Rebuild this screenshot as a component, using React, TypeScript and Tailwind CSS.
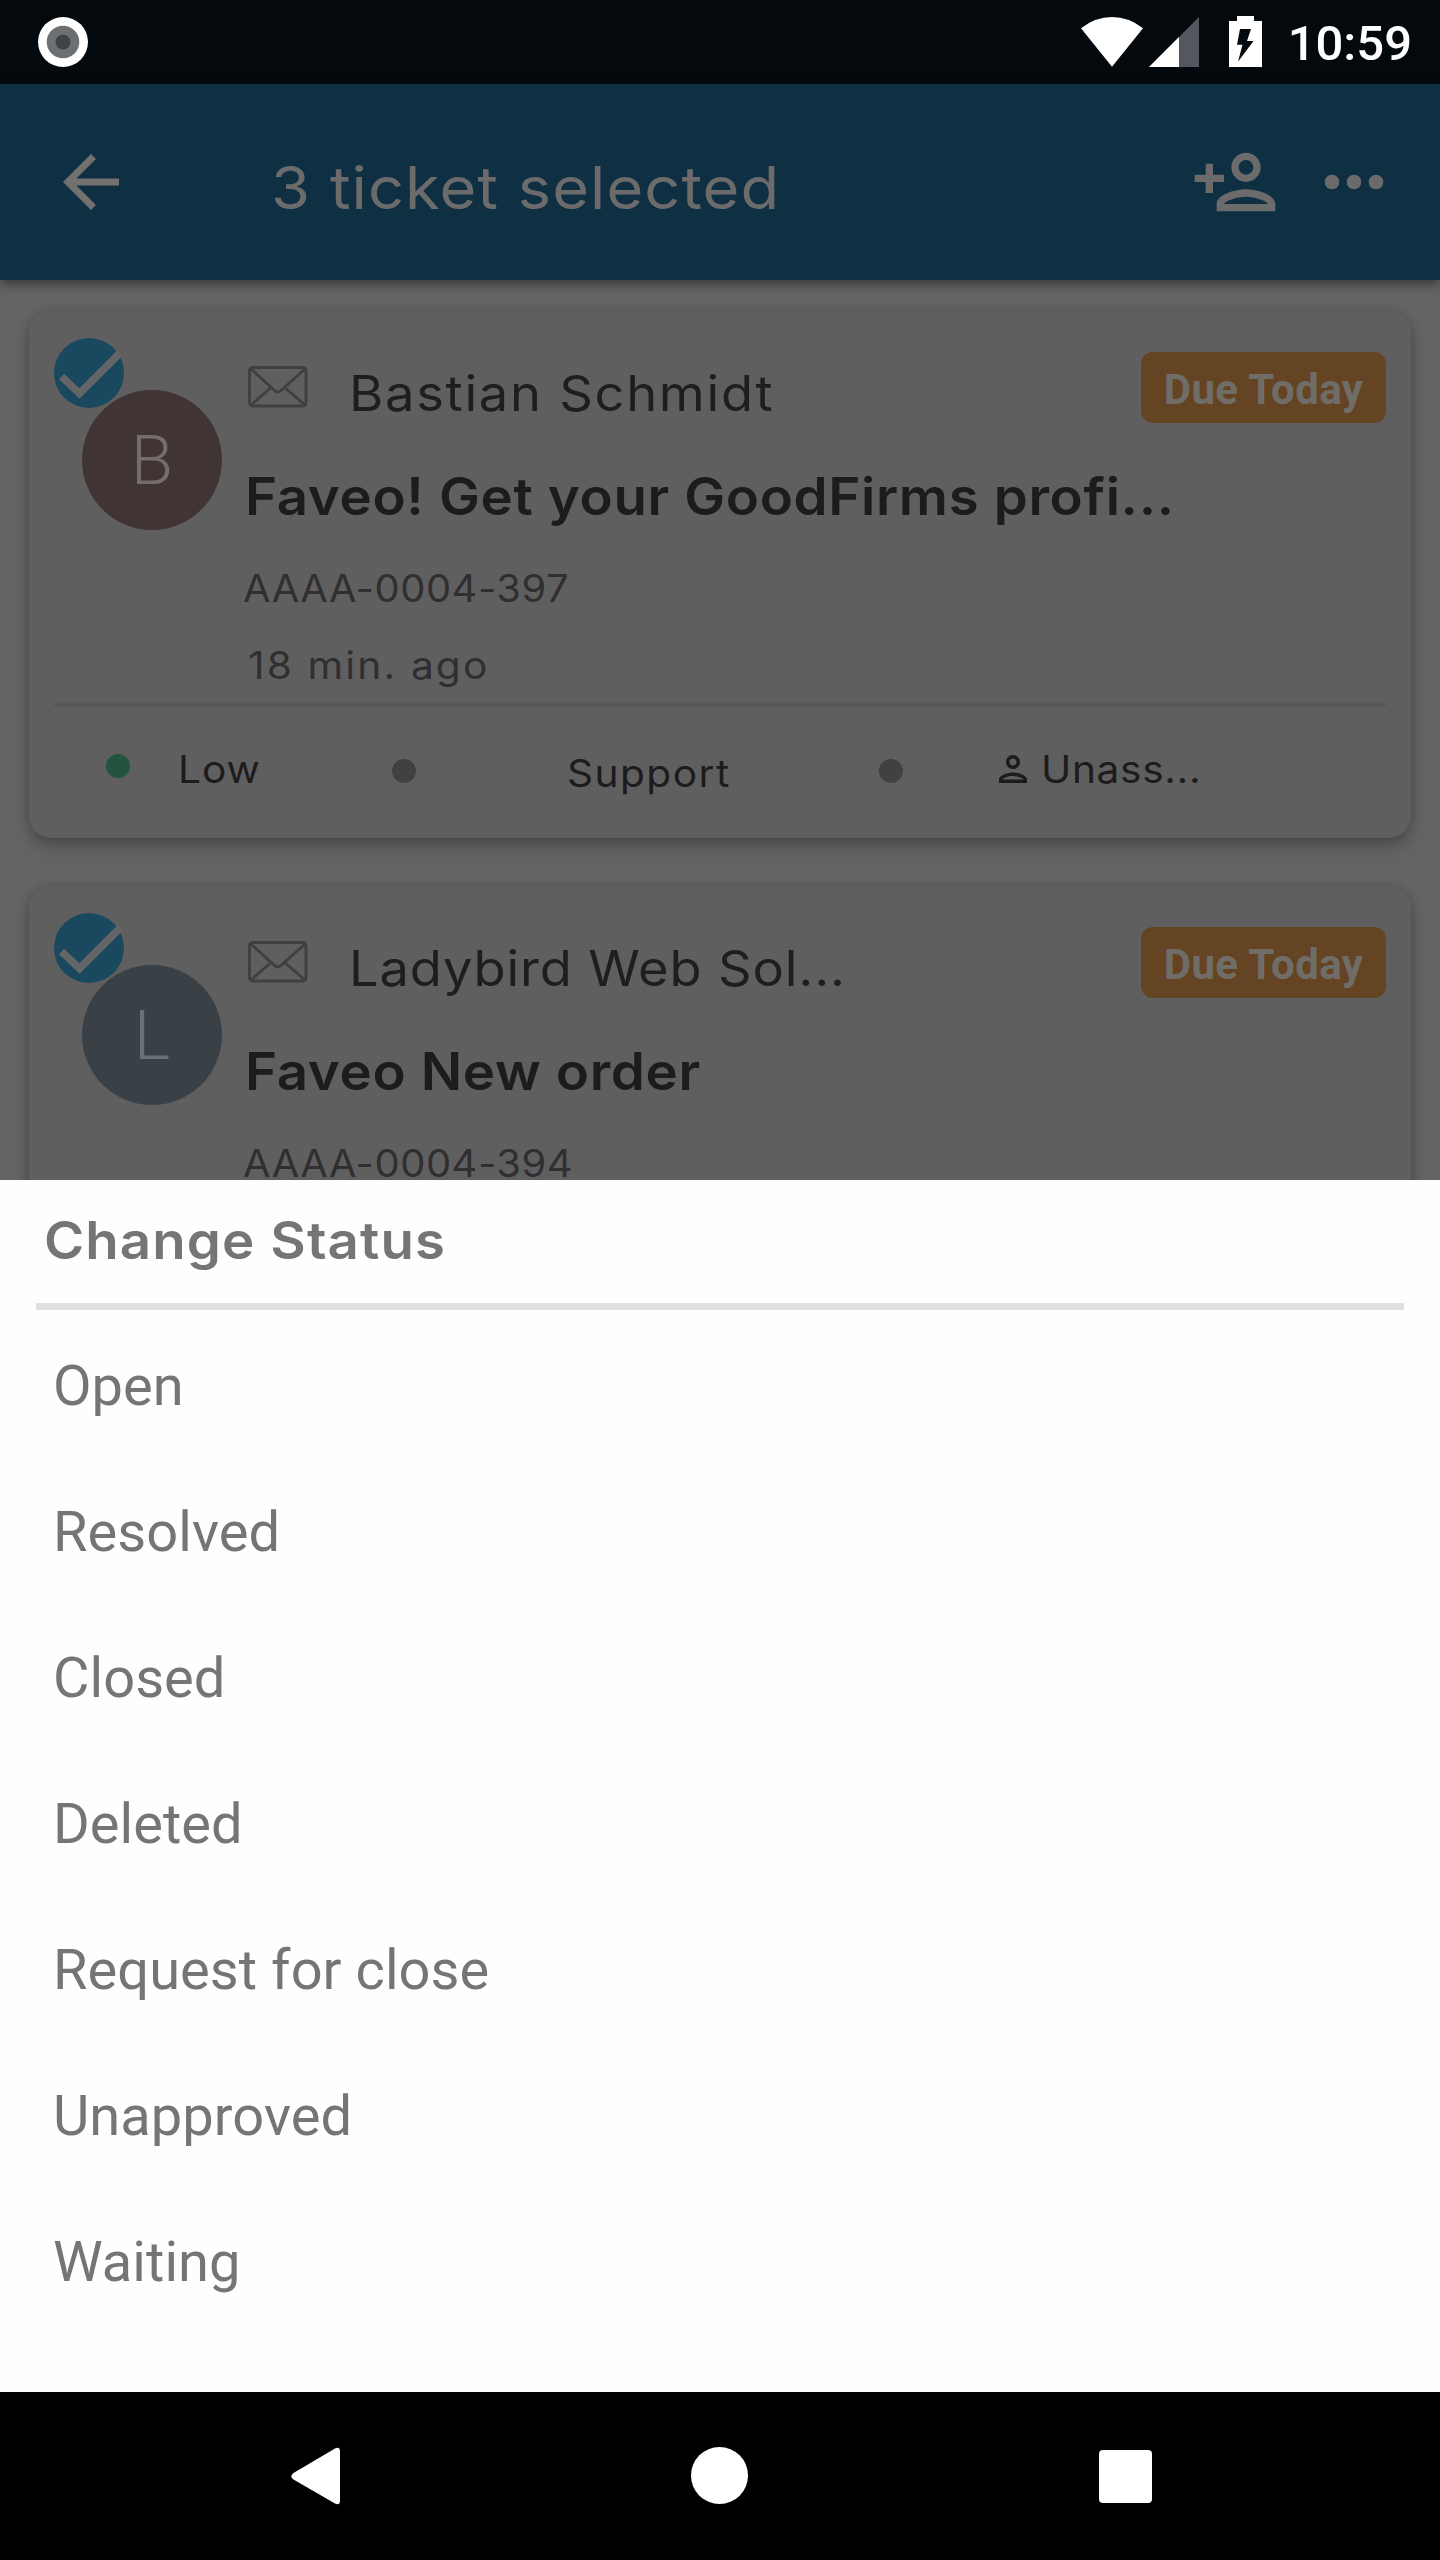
import type { ReactNode } from "react";

function StatusBar() {
  return (
    <div className="flex h-[84px] shrink-0 items-center bg-[#04090d] pl-[38px] pr-[28px]">
      <svg className="h-[50px] w-[50px]" viewBox="0 0 50 50">
        <circle cx="25" cy="25" r="25" fill="#fff" />
        <circle cx="25" cy="25" r="16.3" fill="#6c7072" />
        <circle cx="25" cy="25" r="7.5" fill="#3f4345" />
      </svg>
      <div className="ml-auto flex items-center text-white">
        <svg className="h-[52px] w-[182px]" viewBox="1081 16 182 52">
          <path d="M1081 28.300Q1095 17 1112 17T1143 28.300L1112 66.800Z" fill="#fff" />
          <path d="M1199 17V67H1149Z" fill="#54585e" />
          <path d="M1179 37V67H1149Z" fill="#fff" />
          <path d="M1237 16h17v5h8v46h-33V21h8z" fill="#fff" />
          <path d="M1240 29h11l-4 12h6.500L1238 61.700l4.500-17h-5.500z" fill="#04090d" />
        </svg>
        <span className="ml-[25px] mt-[4px] font-['Roboto',sans-serif] text-[49px] leading-[50px] font-medium">
          10:59
        </span>
      </div>
    </div>
  );
}

function Header() {
  return (
    <header className="relative flex h-[196px] shrink-0 items-center bg-[#0f2f42] pl-[49px] pr-[42px] text-[#6c6b6c] shadow-[0_4px_10px_rgba(0,0,0,0.45)]">
      <svg className="h-[84px] w-[84px]" viewBox="0 0 24 24" fill="#737170">
        <path d="M20 11H7.830l5.590-5.590L12 4l-8 8 8 8 1.410-1.410L7.830 13H20v-2z" />
      </svg>
      <h1 className="ml-[138px] mt-[12px] origin-left scale-x-[1.07] font-['Inter',sans-serif] text-[59px] leading-[72px] font-normal tracking-[1px] whitespace-nowrap">
        3 ticket selected
      </h1>
      <svg className="ml-auto h-[88px] w-[88px]" viewBox="0 0 24 24" fill="currentColor">
        <path d="M15 12c2.210 0 4-1.790 4-4s-1.790-4-4-4-4 1.790-4 4 1.790 4 4 4zm0-6c1.100 0 2 .9 2 2s-.9 2-2 2-2-.9-2-2 .9-2 2-2zm0 8c-2.670 0-8 1.340-8 4v2h16v-2c0-2.660-5.330-4-8-4zm-6 4c.22-.72 3.310-2 6-2 2.700 0 5.800 1.290 6 2H9zm-3-3v-3h3v-2H6V7H4v3H1v2h3v3z" />
      </svg>
      <svg className="ml-[31px] h-[88px] w-[88px]" viewBox="0 0 24 24" fill="currentColor">
        <circle cx="6" cy="12" r="2" />
        <circle cx="12" cy="12" r="2" />
        <circle cx="18" cy="12" r="2" />
      </svg>
    </header>
  );
}

function CheckBadge() {
  return (
    <svg className="absolute -left-[28px] -top-[52px] h-[70px] w-[70px]" viewBox="0 0 70 70">
      <circle cx="35" cy="35" r="35" fill="#19485f" />
      <path d="M7.500 38.500L25.500 55.500L66 15" fill="none" stroke="#646567" strokeWidth="7.500" />
    </svg>
  );
}

function Envelope() {
  return (
    <svg className="h-[42px] w-[60px]" viewBox="0 0 60 42" fill="none" stroke="#403e40" strokeWidth="2.800">
      <rect x="1.500" y="1.500" width="56.500" height="38.500" rx="3" />
      <path d="M3 3L26 24Q29.700 28 33.500 24L57 3M3 39L23 21.500M57 39L36.500 21.500" />
    </svg>
  );
}

interface Ticket {
  initial: string;
  avatar: string;
  name: string;
  nameTracking: string;
  subject: string;
  id: string;
  details?: { age: string; priority: string; department: string; assignee: string };
}

const tickets: Ticket[] = [
  {
    initial: "B",
    avatar: "bg-[#403534] text-[#736d6b]",
    name: "Bastian Schmidt",
    nameTracking: "tracking-[1.600px]",
    subject: "Faveo! Get your GoodFirms profi...",
    id: "AAAA-0004-397",
    details: { age: "18 min. ago", priority: "Low", department: "Support", assignee: "Unass..." },
  },
  {
    initial: "L",
    avatar: "bg-[#394147] text-[#6a7075]",
    name: "Ladybird Web Sol...",
    nameTracking: "tracking-[0.780px]",
    subject: "Faveo New order",
    id: "AAAA-0004-394",
  },
];

function Dot({ className }: { className: string }) {
  return <span className={"block h-[24px] w-[24px] shrink-0 rounded-full " + className} />;
}

function Label({ className, children }: { className: string; children: ReactNode }) {
  return (
    <span className={"origin-left text-[38px] leading-[46px] whitespace-nowrap text-[#1d1b1d] " + className}>
      {children}
    </span>
  );
}

function TicketCard({ ticket }: { ticket: Ticket }) {
  const { details } = ticket;
  return (
    <article className="h-[527px] shrink-0 rounded-[22px] bg-[#605f60] px-[25px] font-['Inter',sans-serif] shadow-[0_8px_16px_rgba(0,0,0,0.24),0_0_10px_rgba(0,0,0,0.12)]">
      <div className="flex h-[391px]">
        <div className="relative ml-[28px] mt-[79px] h-[140px] w-[140px] shrink-0">
          <div
            className={
              "flex h-full w-full items-center justify-center rounded-full font-['Roboto',sans-serif] text-[69px] leading-none font-light " +
              ticket.avatar
            }
          >
            {ticket.initial}
          </div>
          <CheckBadge />
        </div>
        <div className="ml-[23px] flex-1">
          <div className="flex h-[142px] pt-[41px]">
            <div className="ml-[3px] mt-[14px]">
              <Envelope />
            </div>
            <span
              className={
                "ml-[41px] mt-[11px] origin-left scale-x-[1.07] text-[49px] leading-[62px] whitespace-nowrap text-[#1f1d1e] " +
                ticket.nameTracking
              }
            >
              {ticket.name}
            </span>
            <span className="ml-auto flex h-[71px] w-[245px] justify-center rounded-[12px] bg-[#654423] pt-[8px] font-['Roboto',sans-serif] text-[42px] leading-[60px] font-bold tracking-[0.400px] text-[#706d69]">
              Due Today
            </span>
          </div>
          <p className="h-[88px] origin-left scale-x-[1.05] pt-[2px] text-[52px] leading-[83px] font-semibold tracking-[0.620px] whitespace-nowrap text-[#1d1b1c]">
            {ticket.subject}
          </p>
          <p className="-ml-[2px] h-[70px] origin-left scale-x-[1.05] pt-[24px] text-[38px] leading-[46px] tracking-[0.500px] whitespace-nowrap text-[#302e31]">
            {ticket.id}
          </p>
          {details && (
            <p className="ml-[3px] origin-left scale-x-[1.07] pt-[19px] text-[38px] leading-[70px] tracking-[2px] whitespace-nowrap text-[#302e31]">
              {details.age}
            </p>
          )}
        </div>
      </div>
      {details && (
        <>
          <div className="h-[5px] bg-[#5a585a]" />
          <div className="flex h-[124px] items-center pl-[52px]">
            <Dot className="mb-[6px] bg-[#24543d]" />
            <Label className="ml-[48px] w-[214px] scale-x-[1.07] tracking-[0.900px]">{details.priority}</Label>
            <Dot className="mt-[3px] bg-[#424043]" />
            <Label className="ml-[151px] mt-[7px] w-[312px] scale-x-[1.07] tracking-[1.350px]">
              {details.department}
            </Label>
            <Dot className="mt-[3px] bg-[#424043]" />
            <svg className="ml-[89px] h-[42px] w-[42px]" viewBox="0 0 24 24" fill="#1d1b1d">
              <path d="M12 12c2.210 0 4-1.790 4-4s-1.790-4-4-4-4 1.790-4 4 1.790 4 4 4zm0-6c1.100 0 2 .9 2 2s-.9 2-2 2-2-.9-2-2 .9-2 2-2zm0 8c-2.670 0-8 1.340-8 4v2h16v-2c0-2.660-5.330-4-8-4zm6 4H6c.2-.71 3.300-2 6-2s5.800 1.290 6 2z" />
            </svg>
            <Label className="ml-[7px] scale-x-[1.07] tracking-[0.600px]">{details.assignee}</Label>
          </div>
        </>
      )}
    </article>
  );
}

const statuses = ["Open", "Resolved", "Closed", "Deleted", "Request for close", "Unapproved", "Waiting"];

function StatusSheet() {
  return (
    <section className="relative flex h-[1212px] shrink-0 flex-col bg-[#fefefe] text-[#757577]">
      <h2 className="ml-[44px] h-[123px] origin-left scale-x-[1.05] pt-[2px] font-['Inter',sans-serif] text-[52px] leading-[117px] font-semibold tracking-[1.050px]">
        Change Status
      </h2>
      <div className="mx-[36px] h-[7px] bg-[#e0e0e2]" />
      <ul className="pt-[3px] pl-[53px] font-['Roboto',sans-serif] text-[56px] leading-[146px] tracking-[0.050px]">
        {statuses.map((status) => (
          <li key={status}>{status}</li>
        ))}
      </ul>
    </section>
  );
}

function NavigationBar() {
  return (
    <nav className="flex h-[168px] shrink-0 items-center bg-black pl-[286px] pr-[284px]">
      <svg className="h-[60px] w-[60px]" viewBox="0 0 60 60">
        <path d="M49 2.500Q54 0 54 5.500V54.500Q54 60 49 57.500L7.500 33.500Q3 30.500 7.500 27Z" fill="#fff" />
      </svg>
      <span className="mb-[1px] ml-[345px] h-[57px] w-[57px] rounded-full bg-white" />
      <span className="ml-auto mr-[4px] mt-[1px] h-[53px] w-[53px] rounded-[4px] bg-white" />
    </nav>
  );
}

export default function App() {
  return (
    <div className="flex h-[2560px] w-[1440px] flex-col overflow-hidden bg-[#656465]">
      <StatusBar />
      <Header />
      <main className="flex h-[900px] shrink-0 flex-col gap-[48px] overflow-hidden pl-[29px] pr-[29px] pt-[31px]">
        {tickets.map((ticket) => (
          <TicketCard key={ticket.id} ticket={ticket} />
        ))}
      </main>
      <StatusSheet />
      <NavigationBar />
    </div>
  );
}
